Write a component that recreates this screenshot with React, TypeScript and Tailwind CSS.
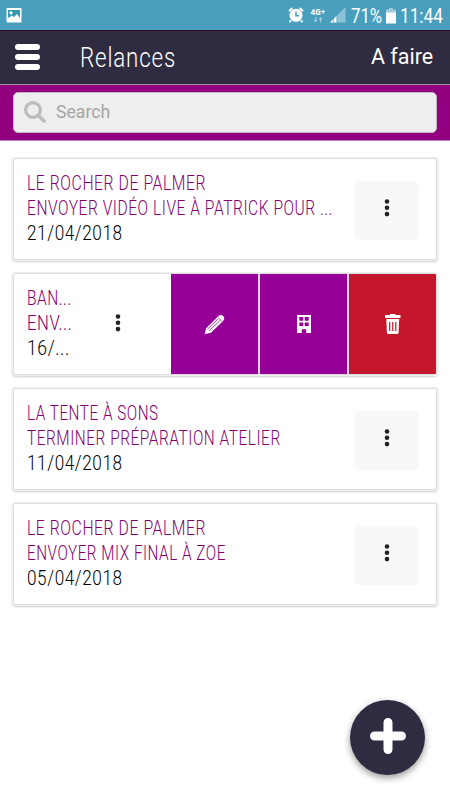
import { useLayoutEffect, useRef, useState } from "react";

type Relance = {
    title: string;
    titleWidth: number;
    action: string;
    actionWidth: number;
    date: string;
    dateWidth: number;
    open?: boolean;
};

const relances: Relance[] = [
    { title: "LE ROCHER DE PALMER", titleWidth: 179, action: "ENVOYER VIDÉO LIVE À PATRICK POUR ...", actionWidth: 306, date: "21/04/2018", dateWidth: 96 },
    { title: "BAN...", titleWidth: 45, action: "ENV...", actionWidth: 45, date: "16/...", dateWidth: 43, open: true },
    { title: "LA TENTE À SONS", titleWidth: 132, action: "TERMINER PRÉPARATION ATELIER", actionWidth: 254, date: "11/04/2018", dateWidth: 96 },
    { title: "LE ROCHER DE PALMER", titleWidth: 179, action: "ENVOYER MIX FINAL À ZOE", actionWidth: 199, date: "05/04/2018", dateWidth: 96 },
];

// Condenses a line of text so that it takes exactly the given width
function FitText({ text, width, className }: { text: string; width: number; className?: string }) {
    const ref = useRef<HTMLSpanElement>(null);
    const [scale, setScale] = useState(1);

    useLayoutEffect(() => {
        if (ref.current) setScale(width / ref.current.offsetWidth);
    }, [text, width]);

    return (
        <div className={className} style={{ width }}>
            <span ref={ref} className="inline-block origin-left whitespace-pre" style={{ transform: `scaleX(${scale})` }}>
                {text}
            </span>
        </div>
    );
}

function StatusBar() {
    return (
        <div className="flex h-[30px] items-center bg-[#499ebe] text-white">
            <svg width="16" height="16" viewBox="0 0 16 16" className="ml-[5.5px]">
                <rect x="0.5" y="1" width="15" height="14.5" rx="1" fill="#fff" />
                <path d="M2 3h12v8l-3-4-3 3-2-1.500-4 2.500z" fill="#3598b0" />
                <circle cx="5" cy="5.800" r="1.600" fill="#fff" />
            </svg>
            <svg width="16" height="16" viewBox="0 0 16 16" className="ml-[266.5px]">
                <circle cx="8" cy="8.300" r="6.500" fill="#fff" />
                <path d="M1 4.300 4.300 1M15 4.300 11.700 1M3 13.500 1.500 15M13 13.500l1.500 1.500" stroke="#fff" strokeWidth="2" />
                <path d="M8 4.500v4.300h3.200" fill="none" stroke="#499ebe" strokeWidth="1.500" />
            </svg>
            <div className="ml-[6px] flex w-4 flex-col items-center">
                <FitText text="4G+" width={15} className="h-[9px] font-['Open_Sans',sans-serif] text-[8px] leading-[9px] font-bold" />
                <svg width="10" height="6" viewBox="0 0 10 6" fill="#a3cede" className="mt-px">
                    <path d="M2 0h1.300v3H4.500L2.600 5.500.8 3H2zM7 5.500V2.500H5.700L7.600 0l1.800 2.500H8.200v3z" />
                </svg>
            </div>
            <svg width="16" height="16" viewBox="0 0 16 16" className="ml-[4px]">
                <path d="M0 15.500 15.500 0v15.500z" fill="#8dc3d7" />
                <path d="M0 15.500 7 8.500v7z" fill="#fff" />
                <path d="M3.300 10v6M6.800 7v9" stroke="#499ebe" strokeWidth=".7" />
            </svg>
            <FitText text="71%" width={31} className="ml-[5px] mt-[2px] h-6 font-[Roboto,sans-serif] text-[20px] leading-6" />
            <svg width="10" height="16" viewBox="0 0 10 16" className="ml-[3.500px] mt-px">
                <path d="M3 0h4v1.500h3V5H0V1.500h3z" fill="#a0cddd" />
                <path d="M0 4.500h10V15.500H0z" fill="#fff" />
            </svg>
            <FitText text="11:44" width={43} className="ml-[4.500px] mt-[2px] h-6 font-[Roboto,sans-serif] text-[20px] leading-6" />
        </div>
    );
}

function Dots() {
    return (
        <svg width="6" height="18" viewBox="0 0 6 18" fill="#222">
            <circle cx="3" cy="2.500" r="2.300" />
            <circle cx="3" cy="8.800" r="2.300" />
            <circle cx="3" cy="15.100" r="2.300" />
        </svg>
    );
}

function PencilIcon() {
    return (
        <svg width="21" height="21" viewBox="0 0 21 21">
            <path d="M.6 20.300 2.200 14.300 14.200 2.300C15.600.9 17 .4 18.500 1.500L19.700 2.800C20.700 4.200 20.300 5.600 19 6.900L7 18.700Z" fill="#fff" />
            <path d="M3.500 15.200 14 4.900M5.200 16.800 15.900 6.600" stroke="#960096" strokeWidth=".8" />
            <path d="M13.700 3.300 18 7.500" stroke="#960096" strokeWidth=".7" />
        </svg>
    );
}

function BuildingIcon() {
    return (
        <svg width="14" height="18" viewBox="0 0 14 18">
            <path d="M0 0h14v18H9.200v-3.800H4.800V18H0z" fill="#fff" />
            <path d="M2.300 2h4v3.800h-4zM7.700 2h4v3.800h-4zM2.300 7.500h4v3.500h-4zM7.700 7.500h4v3.500h-4z" fill="#960096" />
        </svg>
    );
}

function TrashIcon() {
    return (
        <svg width="16" height="20" viewBox="0 0 16 20">
            <path d="M0 1h5V0h5.500v1H15.500v3H0z" fill="#fff" />
            <path d="M1.300 5h12.900l-.6 13.500q-.1 1.500-1.500 1.500H3.400q-1.400 0-1.500-1.500z" fill="#fff" />
            <path d="M4.700 8v9M7.750 8v9M10.800 8v9" stroke="#c5172b" strokeWidth="1.200" />
        </svg>
    );
}

function Card({ item }: { item: Relance }) {
    return (
        <div className="flex h-[102px] overflow-hidden rounded-[2px] border border-[#dedede] bg-white shadow-[0_0_0_1px_#efefef,0_1px_3px_rgba(0,0,0,0.4)]">
            <div className="flex min-w-0 flex-1 items-center pl-[12.500px]">
                <div className="mt-[-1px] font-[Roboto,sans-serif] text-[20px] leading-[25px] font-light tracking-[0.700px]">
                    <FitText text={item.title} width={item.titleWidth} className="h-[25px] text-[#85006f]" />
                    <FitText text={item.action} width={item.actionWidth} className="h-[25px] text-[#85006f]" />
                    <FitText text={item.date} width={item.dateWidth} className="h-[25px] text-black" />
                </div>
                <div className={item.open ? "ml-auto mr-[50.500px] mt-[-3px]" : "ml-auto mr-[17px] mt-[3px] flex h-[59px] w-[65px] items-center justify-center rounded-[5px] bg-[#f8f8f8]"}>
                    <div className={item.open ? "" : "mt-[-6px] ml-px"}>
                        <Dots />
                    </div>
                </div>
            </div>
            {item.open && (
                <div className="flex text-white">
                    <div className="flex w-[87px] items-center justify-center bg-[#960096]">
                        <PencilIcon />
                    </div>
                    <div className="flex w-[89px] items-center justify-center border-l-2 border-[#ead5ea] bg-[#960096]">
                        <BuildingIcon />
                    </div>
                    <div className="flex w-[89px] items-center justify-center border-l-2 border-[#ead5ea] bg-[#c5172b]">
                        <TrashIcon />
                    </div>
                </div>
            )}
        </div>
    );
}

export default function App() {
    return (
        <main className="relative h-[800px] w-[450px] overflow-hidden bg-white">
            <StatusBar />

            <header className="flex h-[55px] items-center border-t border-b border-t-[#260b18] border-b-[#969099] bg-[#2f2b40] text-white">
                <div className="ml-[15px] mt-[-1px] flex w-[25px] flex-col gap-[4px]">
                    <span className="h-[6px] rounded-full bg-white" />
                    <span className="h-[6px] rounded-full bg-white" />
                    <span className="h-[6px] rounded-full bg-white" />
                </div>
                <FitText text="Relances" width={96} className="ml-[40px] h-8 font-[Roboto,sans-serif] text-[27px] leading-8 font-light tracking-[1px]" />
                <FitText text="A faire" width={62} className="ml-auto mr-[17px] mt-[-3px] h-8 font-[Roboto,sans-serif] text-[22.500px] leading-8" />
            </header>

            <div className="h-[56px] border-b border-[#bd7db5] bg-[#920080] px-[13px] pt-[7px]">
                <div className="flex h-[41px] items-center rounded-[5px] border border-[#c4b5c2] bg-[#eee] pl-[10px]">
                    <svg width="22" height="22" viewBox="0 0 22 22" fill="none" stroke="#bcbcbc" className="mt-[-2px]">
                        <circle cx="9" cy="9" r="7.400" strokeWidth="3.200" />
                        <path d="m14.500 14.500 5.500 5.500" strokeWidth="3.600" strokeLinecap="round" />
                    </svg>
                    <FitText text="Search" width={54} className="ml-[10px] mt-[-1px] h-6 font-[Roboto,sans-serif] text-[18px] leading-6 text-[#a5a5a5]" />
                </div>
            </div>

            <section className="flex flex-col gap-[13px] px-[13px] pt-[17px]">
                {relances.map((item, i) => (
                    <Card key={i} item={item} />
                ))}
            </section>

            {/* Floating add button */}
            <button className="absolute top-[700px] left-[350px] flex h-[75px] w-[75px] items-center justify-center rounded-full bg-[#2f2b40] shadow-[0_3px_7px_rgba(0,0,0,0.4)]">
                <svg width="36" height="36" viewBox="0 0 36 36" stroke="#fff" strokeWidth="9" strokeLinecap="round" className="mb-[3px]">
                    <path d="M18 4.500v27M4.500 18h27" />
                </svg>
            </button>
        </main>
    );
}
